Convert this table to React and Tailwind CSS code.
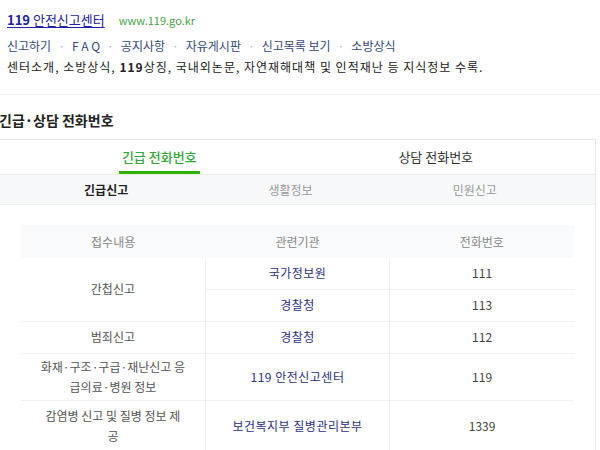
const links = ["신고하기", "F A Q", "공지사항", "자유게시판", "신고목록 보기", "소방상식"];

const rows = [
  { kind: "간첩신고", org: "국가정보원", tel: "111", span: 2, h: "h-[31px]" },
  { org: "경찰청", tel: "113", h: "h-[32px]" },
  { kind: "범죄신고", org: "경찰청", tel: "112", span: 1, h: "h-[32px]" },
  {
    kind: (
      <>
        화재·구조·구급·재난신고 응<br />급의료·병원 정보
      </>
    ),
    org: "119 안전신고센터",
    tel: "119",
    span: 1,
    h: "h-[47px]",
  },
  {
    kind: (
      <>
        감염병 신고 및 질병 정보 제<br />공
      </>
    ),
    org: "보건복지부 질병관리본부",
    tel: "1339",
    span: 1,
    h: "h-[52px]",
  },
];

export default function App() {
  return (
    <div className="w-[600px] h-[450px] overflow-hidden bg-white text-[#333] font-['Noto_Sans_CJK_KR','Noto_Sans',sans-serif]">
      {/* Search result */}
      <div className="h-[95px] pl-[7px] pt-[10px] border-b border-[#eeeeee]">
        <div className="flex items-baseline gap-[14px] leading-[20px]">
          <a href="#" className="text-[13px] text-[#2222a8] underline underline-offset-2">
            <span className="font-bold">119</span> 안전신고센터
          </a>
          <span className="text-[11px] text-[#4a9f4a]">www.119.go.kr</span>
        </div>
        <div className="mt-[6px] flex items-center leading-[20px] text-[12px] text-[#34477a]">
          {links.map((l, i) => (
            <span key={l} className="flex items-center">
              {i > 0 && <span className="mx-[7px] text-[#b5b5b5]">·</span>}
              <a href="#">{l}</a>
            </span>
          ))}
        </div>
        <p className="mt-[1px] leading-[20px] text-[12px] tracking-[1px] text-[#222]">
          센터소개, 소방상식, <b>119</b>상징, 국내외논문, 자연재해대책 및 인적재난 등 지식정보 수록.
        </p>
      </div>

      {/* Heading */}
      <h2 className="pt-[15px] mb-[9px] -ml-[1px] leading-[20px] text-[14px] font-bold text-[#222]">
        긴급·상담 전화번호
      </h2>

      {/* Card */}
      <div className="-ml-[1px] w-[597px] border border-[#e8e8e8] bg-white">
        <div className="h-[35px] grid grid-cols-2 px-[21px] border-b border-[#ececec] text-[13px]">
          <div className="flex justify-center">
            <span className="h-full flex items-center px-[3px] border-b-[3px] border-[#2db400] pt-[2px] text-[#34a83a] font-medium">
              긴급 전화번호
            </span>
          </div>
          <div className="flex items-center justify-center text-[#333]">상담 전화번호</div>
        </div>

        <div className="h-[30px] flex pl-[14px] pr-[28px] bg-[#f7f8fa] border-b border-[#efefef] text-[12px]">
          <div className="flex-1 flex items-center justify-center font-bold text-[#222]">긴급신고</div>
          <div className="flex-1 flex items-center justify-center text-[#999]">생활정보</div>
          <div className="flex-1 flex items-center justify-center text-[#999]">민원신고</div>
        </div>

        <div className="px-[21px] pt-[20px] pb-4">
          <table className="w-full table-fixed border-collapse text-[12px] text-center">
            <thead>
              <tr className="h-[33px] bg-[#f9fafb] text-[#888]">
                <th className="font-normal">접수내용</th>
                <th className="font-normal">관련기관</th>
                <th className="font-normal">전화번호</th>
              </tr>
            </thead>
            <tbody>
              {rows.map((r, i) => (
                <tr key={i} className={`${r.h} border-b border-[#f0f0f0]`}>
                  {r.kind && (
                    <td rowSpan={r.span} className="border-r border-b border-[#f0f0f0] text-[#555] leading-[20px]">
                      {r.kind}
                    </td>
                  )}
                  <td className="border-r border-[#f0f0f0] text-[#2b2f86] tracking-[0.5px]">
                    <a href="#">{r.org}</a>
                  </td>
                  <td className="text-[#444]">{r.tel}</td>
                </tr>
              ))}
            </tbody>
          </table>
        </div>
      </div>
    </div>
  );
}
